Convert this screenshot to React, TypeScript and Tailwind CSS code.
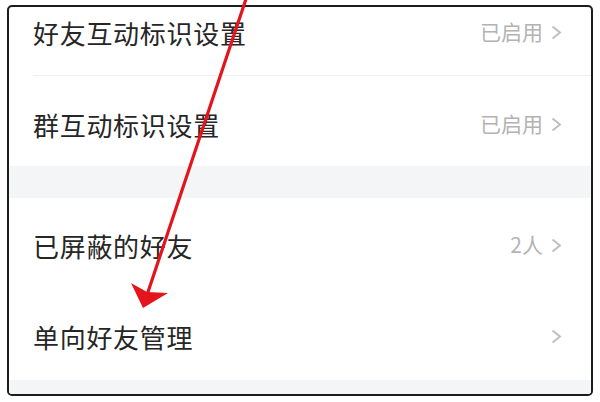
const Chevron = () => (
  <svg width="13" height="15" viewBox="0 0 13 15" className="ml-[7px]">
    <polyline points="2.5,1.5 10,7.5 2.5,13.5" fill="none" stroke="#bcbcbc" strokeWidth="1.8" strokeLinejoin="miter" />
  </svg>
);

interface RowProps {
  title: string;
  value?: string;
  className?: string;
}

const Row = ({ title, value, className }: RowProps) => (
  <div className={`flex items-center justify-between pl-[24px] pr-[28px] ${className ?? ""}`}>
    <span className="text-[26px] tracking-[0.7px] text-[#262626]">{title}</span>
    <div className="flex items-center">
      {value && <span className="text-[21px] text-[#b3b3b3]">{value}</span>}
      <Chevron />
    </div>
  </div>
);

export default function App() {
  return (
    <div
      className="relative w-[600px] h-[402px] bg-white overflow-hidden"
      style={{ fontFamily: '"Noto Sans CJK SC", "Noto Sans", sans-serif' }}
    >
      <div className="ml-[7px] mt-[5px] w-[586px] h-[391px] border-2 border-[#1c1c1c] rounded-[5px] overflow-hidden flex flex-col bg-white">
        {/* first group */}
        <Row title="好友互动标识设置" value="已启用" className="h-[68px] pb-[18px]" />
        <div className="ml-[24px] h-px bg-[#f0f0f0]" />
        <Row title="群互动标识设置" value="已启用" className="h-[90px] pt-[6px]" />

        {/* gap */}
        <div className="h-[32px] bg-[#f4f5f7]" />

        {/* second group */}
        <Row title="已屏蔽的好友" value="2人" className="h-[92px] pt-[2px]" />
        <Row title="单向好友管理" className="h-[90px] pt-[2px]" />

        <div className="flex-1 bg-[#f4f5f7]" />
      </div>

      {/* red annotation arrow */}
      <svg className="absolute left-0 top-0" width="600" height="402" viewBox="0 0 600 402">
        <line x1="247" y1="-4" x2="148" y2="292" stroke="#e3141c" strokeWidth="3.2" strokeLinecap="round" />
        <polygon points="143,308 131,283 147,292 168,293" fill="#e3141c" />
      </svg>
    </div>
  );
}
